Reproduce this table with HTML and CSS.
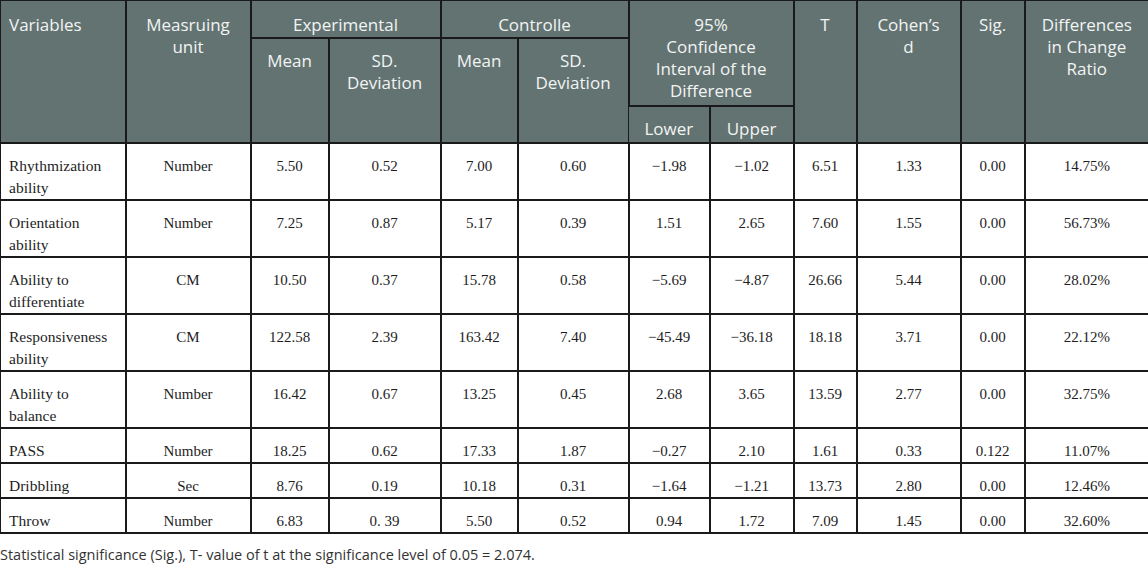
FILE: index.html
```html
<!DOCTYPE html>
<html>
<head>
<meta charset="utf-8">
<link rel="stylesheet" href="styles.css">
</head>
<body>
<table class="stats">
  <colgroup>
    <col class="c125"><col class="c125"><col class="c78"><col class="c112"><col class="c77"><col class="c111"><col class="c81"><col class="c84"><col class="c63"><col class="c104"><col class="c64"><col class="c124">
  </colgroup>
  <thead>
    <tr class="h1">
      <th rowspan="3" class="left">Variables</th>
      <th rowspan="3">Measruing<br>unit</th>
      <th colspan="2">Experimental</th>
      <th colspan="2">Controlle</th>
      <th colspan="2" rowspan="2">95%<br>Confidence<br>Interval of the<br>Difference</th>
      <th rowspan="3">T</th>
      <th rowspan="3">Cohen’s<br>d</th>
      <th rowspan="3">Sig.</th>
      <th rowspan="3">Differences<br>in Change<br>Ratio</th>
    </tr>
    <tr class="h2">
      <th rowspan="2" class="sub">Mean</th>
      <th rowspan="2" class="sub">SD.<br>Deviation</th>
      <th rowspan="2" class="sub">Mean</th>
      <th rowspan="2" class="sub">SD.<br>Deviation</th>
    </tr>
    <tr class="h3">
      <th class="sub">Lower</th>
      <th class="sub">Upper</th>
    </tr>
  </thead>
  <tbody>
    <tr class="tall"><td class="left">Rhythmization<br>ability</td><td>Number</td><td>5.50</td><td>0.52</td><td>7.00</td><td>0.60</td><td>−1.98</td><td>−1.02</td><td>6.51</td><td>1.33</td><td>0.00</td><td>14.75%</td></tr>
    <tr class="tall"><td class="left">Orientation<br>ability</td><td>Number</td><td>7.25</td><td>0.87</td><td>5.17</td><td>0.39</td><td>1.51</td><td>2.65</td><td>7.60</td><td>1.55</td><td>0.00</td><td>56.73%</td></tr>
    <tr class="tall"><td class="left">Ability to<br>differentiate</td><td>CM</td><td>10.50</td><td>0.37</td><td>15.78</td><td>0.58</td><td>−5.69</td><td>−4.87</td><td>26.66</td><td>5.44</td><td>0.00</td><td>28.02%</td></tr>
    <tr class="tall"><td class="left">Responsiveness<br>ability</td><td>CM</td><td>122.58</td><td>2.39</td><td>163.42</td><td>7.40</td><td>−45.49</td><td>−36.18</td><td>18.18</td><td>3.71</td><td>0.00</td><td>22.12%</td></tr>
    <tr class="tall"><td class="left">Ability to<br>balance</td><td>Number</td><td>16.42</td><td>0.67</td><td>13.25</td><td>0.45</td><td>2.68</td><td>3.65</td><td>13.59</td><td>2.77</td><td>0.00</td><td>32.75%</td></tr>
    <tr class="short"><td class="left">PASS</td><td>Number</td><td>18.25</td><td>0.62</td><td>17.33</td><td>1.87</td><td>−0.27</td><td>2.10</td><td>1.61</td><td>0.33</td><td>0.122</td><td>11.07%</td></tr>
    <tr class="short"><td class="left">Dribbling</td><td>Sec</td><td>8.76</td><td>0.19</td><td>10.18</td><td>0.31</td><td>−1.64</td><td>−1.21</td><td>13.73</td><td>2.80</td><td>0.00</td><td>12.46%</td></tr>
    <tr class="short"><td class="left">Throw</td><td>Number</td><td>6.83</td><td>0. 39</td><td>5.50</td><td>0.52</td><td>0.94</td><td>1.72</td><td>7.09</td><td>1.45</td><td>0.00</td><td>32.60%</td></tr>
  </tbody>
</table>
<p class="note">Statistical significance (Sig.), T- value of t at the significance level of 0.05 = 2.074.</p>
</body>
</html>
```
FILE: styles.css
```css
html, body {
  margin: 0;
  padding: 0;
  background: #ffffff;
}
.stats {
  width: 1148px;
  table-layout: fixed;
  border-collapse: collapse;
}
.c125 { width: 125px; }
.c78 { width: 78px; }
.c112 { width: 112px; }
.c77 { width: 77px; }
.c111 { width: 111px; }
.c81 { width: 81px; }
.c84 { width: 84px; }
.c63 { width: 63px; }
.c104 { width: 104px; }
.c64 { width: 64px; }
.c124 { width: 124px; }
.stats th {
  background: #627371;
  color: #f2f4f4;
  font-family: "Open Sans", "Noto Sans", sans-serif;
  font-weight: 400;
  font-size: 17px;
  line-height: 22px;
  text-align: center;
  vertical-align: top;
  padding: 13px 2px 0 2px;
  border: 2px solid #1a1a1a;
}
.stats th.sub {
  padding-top: 11px;
}
.stats th.left,
.stats td.left {
  text-align: left;
  padding-left: 8px;
}
.h1 { height: 37px; }
.h2 { height: 68px; }
.h3 { height: 37px; }
.stats td {
  font-family: "Liberation Serif", "Times New Roman", serif;
  font-size: 15px;
  line-height: 22px;
  color: #1e1e1e;
  text-align: center;
  vertical-align: top;
  padding: 11px 2px 0 2px;
  border: 2px solid #1a1a1a;
}
.stats td.left {
  font-size: 15.5px;
}
.tall { height: 56.1px; }
.short { height: 32px; }
.short td { padding-top: 11px; }
.stats tr:first-child th { border-top-width: 1px; }
.stats th:first-child, .stats td:first-child { border-left-width: 1px; }
.stats tr > :last-child { border-right-width: 1px; }
.note {
  margin: 12px 0 0 0;
  font-family: "Open Sans", "Noto Sans", sans-serif;
  font-size: 14.5px;
  line-height: 18px;
  color: #333;
}
```
